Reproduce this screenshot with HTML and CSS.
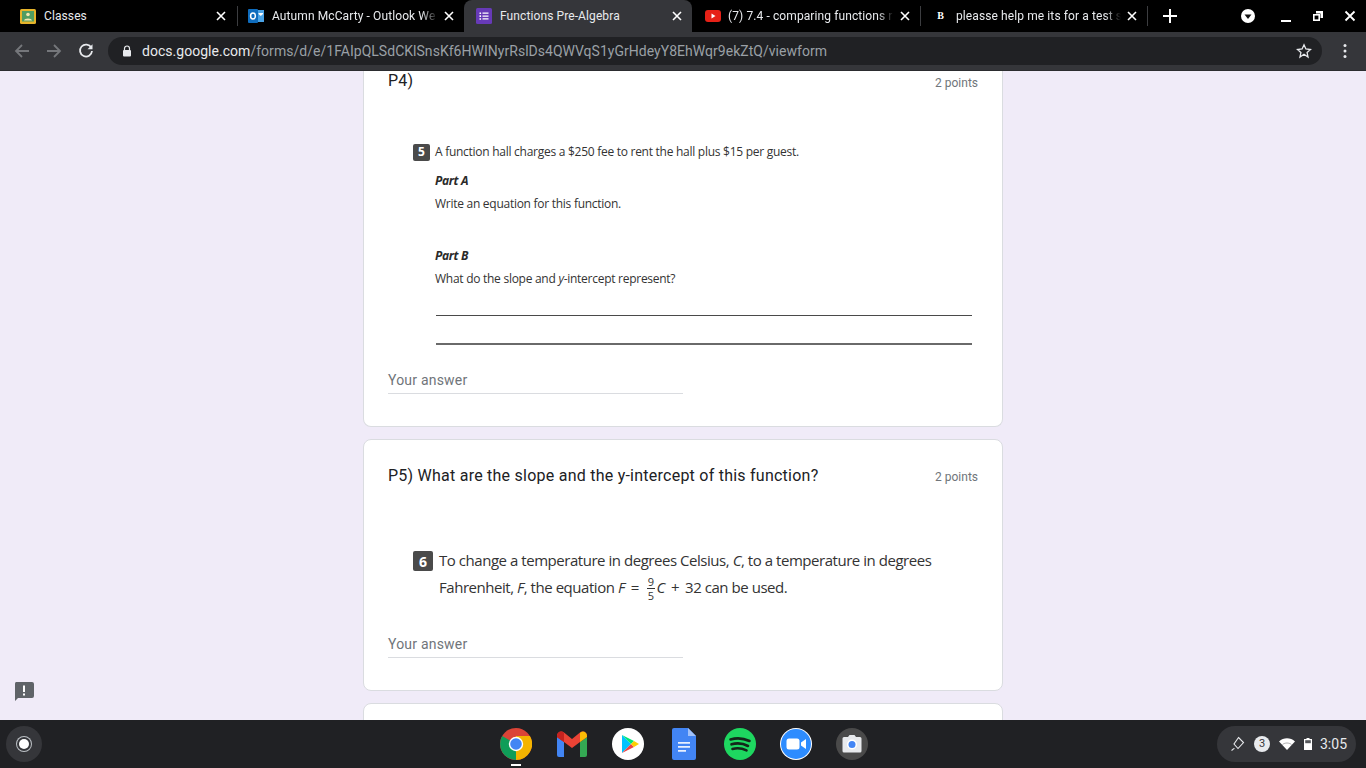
FILE: index.html
```html
<!DOCTYPE html>
<html lang="en">
<head>
<meta charset="utf-8">
<title>Functions Pre-Algebra</title>
<link rel="stylesheet" href="styles.css">
</head>
<body>
<div class="tabstrip">
  <div class="tab tab-w1">
    <svg class="fav" viewBox="0 0 16 16"><rect x="0" y="1" width="16" height="15" rx="1.5" fill="#e5b32a"/><rect x="2" y="3" width="12" height="10.500" fill="#4f9d62"/><circle cx="8" cy="6.500" r="1.800" fill="#f1e6b0"/><path d="M4 12.500c0-2.800 8-2.800 8 0z" fill="#f1e6b0"/></svg>
    <span class="tab-title">Classes</span>
    <svg class="tab-x" viewBox="0 0 14 14"><path d="M3 3l8 8M11 3l-8 8" stroke="#fff" stroke-width="1.600"/></svg>
  </div>
  <div class="sep"></div>
  <div class="tab tab-w2">
    <svg class="fav" viewBox="0 0 16 16"><rect x="6" y="2" width="10" height="12" fill="#4aa3e6"/><rect x="0" y="1" width="10" height="14" rx="1" fill="#0f6cbd"/><ellipse cx="5" cy="8" rx="2.400" ry="3" fill="none" stroke="#fff" stroke-width="1.500"/><path d="M10.500 5h4.500v1l-2.200 2-2.300-2z" fill="#fff"/></svg>
    <span class="tab-title fade">Autumn McCarty - Outlook We</span>
    <svg class="tab-x" viewBox="0 0 14 14"><path d="M3 3l8 8M11 3l-8 8" stroke="#fff" stroke-width="1.600"/></svg>
  </div>
  <div class="tab tab-active">
    <svg class="fav" viewBox="0 0 16 16"><rect width="16" height="16" rx="1.500" fill="#673ab7"/><path d="M6.500 4.500h6v1.300h-6zM6.500 7.400h6v1.300h-6zM6.500 10.300h6v1.300h-6zM3.500 4.400h1.600V6H3.500zM3.500 7.300h1.600v1.600H3.500zM3.500 10.200h1.600v1.600H3.500z" fill="#fff"/></svg>
    <span class="tab-title">Functions Pre-Algebra</span>
    <svg class="tab-x" viewBox="0 0 14 14"><path d="M3 3l8 8M11 3l-8 8" stroke="#fff" stroke-width="1.600"/></svg>
  </div>
  <div class="tab tab-w3">
    <svg class="fav" viewBox="0 0 16 16"><rect y="2" width="16" height="12" rx="3" fill="#e62117"/><path d="M6.500 5.500l4 2.500-4 2.500z" fill="#fff"/></svg>
    <span class="tab-title fade">(7) 7.4 - comparing functions r</span>
    <svg class="tab-x" viewBox="0 0 14 14"><path d="M3 3l8 8M11 3l-8 8" stroke="#fff" stroke-width="1.600"/></svg>
  </div>
  <div class="sep"></div>
  <div class="tab tab-w4">
    <span class="fav fav-b">B</span>
    <span class="tab-title fade">pleasse help me its for a test s</span>
    <svg class="tab-x" viewBox="0 0 14 14"><path d="M3 3l8 8M11 3l-8 8" stroke="#fff" stroke-width="1.600"/></svg>
  </div>
  <div class="sep"></div>
  <svg class="plus" viewBox="0 0 14 14"><path d="M7 0v14M0 7h14" stroke="#fff" stroke-width="2"/></svg>
  <div class="win-controls">
    <svg class="drop" viewBox="0 0 14 14"><circle cx="7" cy="7" r="7" fill="#fff"/><path d="M3.500 5.500h7L7 10z" fill="#111"/></svg>
    <svg class="win-btn win-min" viewBox="0 0 14 14"><path d="M2 12h10" stroke="#fff" stroke-width="2"/></svg>
    <svg class="win-btn" viewBox="0 0 14 14"><path d="M5 2h7v7H9.500V4.500H5z" fill="#fff"/><rect x="2.800" y="5.800" width="5.400" height="5.400" fill="none" stroke="#fff" stroke-width="1.600"/></svg>
    <svg class="win-btn" viewBox="0 0 14 14"><path d="M2.500 2.500l9 9M11.500 2.500l-9 9" stroke="#fff" stroke-width="1.800"/></svg>
  </div>
</div>

<div class="toolbar">
  <svg class="nav-icon" viewBox="0 0 16 16"><path d="M15 8H2M8 2L2 8l6 6" fill="none" stroke="#75777b" stroke-width="1.800"/></svg>
  <svg class="nav-icon" viewBox="0 0 16 16"><path d="M1 8h13M8 2l6 6-6 6" fill="none" stroke="#75777b" stroke-width="1.800"/></svg>
  <svg class="nav-icon" viewBox="0 0 16 16"><path d="M13.300 4.700A6 6 0 1 0 14 8" fill="none" stroke="#e8eaed" stroke-width="1.800"/><path d="M14.500 1.200v5h-5z" fill="#e8eaed"/></svg>
  <div class="omnibox">
    <svg class="lock" viewBox="0 0 10 12"><path d="M2.500 5V3.500a2.500 2.500 0 0 1 5 0V5" fill="none" stroke="#e8eaed" stroke-width="1.200"/><rect x="1" y="5" width="8" height="6.500" rx="1" fill="#e8eaed"/></svg>
    <span class="url"><span class="url-host">docs.google.com</span>/forms/d/e/1FAIpQLSdCKlSnsKf6HWINyrRslDs4QWVqS1yGrHdeyY8EhWqr9ekZtQ/viewform</span>
    <svg class="star" viewBox="0 0 16 16"><path d="M8 1.800l1.900 4.200 4.600.5-3.400 3.100.9 4.500L8 11.300l-4 2.800.9-4.500L1.500 6.500 6.100 6z" fill="none" stroke="#e8eaed" stroke-width="1.300"/></svg>
  </div>
  <svg class="menu" viewBox="0 0 4 16"><circle cx="2" cy="2.500" r="1.500" fill="#e8eaed"/><circle cx="2" cy="8" r="1.500" fill="#e8eaed"/><circle cx="2" cy="13.500" r="1.500" fill="#e8eaed"/></svg>
</div>

<main class="page">
  <section class="card card-clipped">
    <div class="q-head"><h2 class="q-title">P4)</h2><span class="points">2 points</span></div>
    <div class="figure fig5">
      <p class="fig-line"><span class="num num5">5</span>A function hall charges a $250 fee to rent the hall plus $15 per guest.</p>
      <div class="fig-body">
        <p class="part part-a">Part A</p>
        <p class="fig-text">Write an equation for this function.</p>
        <p class="part part-b">Part B</p>
        <p class="fig-text">What do the slope and <i>y</i>-intercept represent?</p>
        <div class="rule rule1"></div>
        <div class="rule rule2"></div>
      </div>
    </div>
    <div class="answer answer-1">Your answer</div>
  </section>

  <section class="card card-p5">
    <div class="q-head"><h2 class="q-title">P5) What are the slope and the y-intercept of this function?</h2><span class="points">2 points</span></div>
    <div class="figure fig6">
      <span class="num num6">6</span>
      <div class="fig6-text">
        <p>To change a temperature in degrees Celsius, <i>C</i>, to a temperature in degrees</p>
        <p class="fig6-l2">Fahrenheit, <i>F</i>, the equation <i>F</i><span class="op">=</span><span class="frac"><span class="numr">9</span><span class="den">5</span></span><i>C</i><span class="op">+</span>32 can be used.</p>
      </div>
    </div>
    <div class="answer answer-2">Your answer</div>
  </section>

  <section class="card card-next"></section>

  <div class="feedback">
    <svg viewBox="0 0 20 20"><path d="M2 0h16a2 2 0 0 1 2 2v12a2 2 0 0 1-2 2H4l-3 3V2a2 2 0 0 1 1-2z" fill="#5f6368"/><path d="M9 3.500h2v6.500H9zM9 11.500h2v2H9z" fill="#fff"/></svg>
  </div>
</main>

<footer class="shelf">
  <div class="launcher"><span class="launcher-dot"></span></div>
  <div class="apps">
    <div class="app app-active">
      <svg viewBox="0 0 32 32"><circle cx="16" cy="16" r="16" fill="#db4437"/><path d="M16 16L2.200 8A16 16 0 0 0 16 32z" fill="#0f9d58"/><path d="M16 8h13.900A16 16 0 0 1 16 32L16 16z" fill="#f4b400"/><circle cx="16" cy="16" r="7.200" fill="#fff"/><circle cx="16" cy="16" r="5.800" fill="#4285f4"/></svg>
      <span class="app-mark"></span>
    </div>
    <div class="app">
      <svg viewBox="0 0 32 32"><path d="M1 9v18a2 2 0 0 0 2 2h5V14z" fill="#4285f4"/><path d="M24 14v15h5a2 2 0 0 0 2-2V9z" fill="#34a853"/><path d="M1 8c0-4 4-5.500 7-3.500L16 11l8-6.500c3-2 7-.500 7 3.500v1l-7 5-8 6-8-6-7-5z" fill="#ea4335"/><path d="M24 5l.500-.6C27 2.500 31 4 31 8v1l-7 5z" fill="#fbbc04"/><path d="M1 8c0-4 4-5.500 7-3.500V14L1 9z" fill="#c5221f"/></svg>
    </div>
    <div class="app">
      <svg viewBox="0 0 32 32"><circle cx="16" cy="16" r="16" fill="#fff"/><path d="M10 7v18l9-9z" fill="#00c3ff"/><path d="M10 7l9 9 3-3z" fill="#00e676"/><path d="M10 25l9-9 3 3z" fill="#ef4444"/><path d="M22 13l-3 3 3 3 5-3z" fill="#fdd000"/></svg>
    </div>
    <div class="app">
      <svg viewBox="0 0 32 32"><path d="M6 0h14l8 8v22a2 2 0 0 1-2 2H6a2 2 0 0 1-2-2V2a2 2 0 0 1 2-2z" fill="#4285f4"/><path d="M20 0l8 8h-8z" fill="#a1c2fa"/><path d="M10 14h12v1.800H10zM10 18h12v1.800H10zM10 22h8v1.800h-8z" fill="#e8f0fe"/></svg>
    </div>
    <div class="app">
      <svg viewBox="0 0 32 32"><circle cx="16" cy="16" r="16" fill="#1ed760"/><path d="M6.500 11.500c6-1.800 13-1.300 19 1.500M7.500 16.300c5.500-1.500 11.500-1 16.500 1.700M8.500 21c4.500-1.200 9.500-.8 14 1.400" fill="none" stroke="#14261a" stroke-width="2.600" stroke-linecap="round"/></svg>
    </div>
    <div class="app">
      <svg viewBox="0 0 32 32"><circle cx="16" cy="16" r="16" fill="#fff"/><circle cx="16" cy="16" r="15" fill="#2d8cff"/><rect x="6.500" y="10.500" width="13" height="11" rx="2.500" fill="#fff"/><path d="M21 14.500l5-3.500v10l-5-3.500z" fill="#fff"/></svg>
    </div>
    <div class="app">
      <svg viewBox="0 0 32 32"><circle cx="16" cy="16" r="16" fill="#4a4a4a"/><path d="M6.500 10.500a1.500 1.500 0 0 1 1.500-1.500h4l1.500-2h5l1.500 2h4a1.500 1.500 0 0 1 1.500 1.500V23a1.500 1.500 0 0 1-1.500 1.500H8A1.500 1.500 0 0 1 6.500 23z" fill="#e8eaed"/><circle cx="16" cy="16.500" r="5" fill="#fff"/><circle cx="16" cy="16.500" r="3.500" fill="#4285f4"/></svg>
    </div>
  </div>
  <div class="tray">
    <svg class="tray-stylus" viewBox="0 0 16 16"><path d="M8.500 1.500l5 5-5.500 6-4-4.500zM1.500 14.500c1.500-.5 1.500-2 3-2" fill="none" stroke="#e8eaed" stroke-width="1.100"/></svg>
    <span class="tray-badge">3</span>
    <svg class="tray-wifi" viewBox="0 0 16 12"><path d="M0 3.500C4.500-.8 11.500-.8 16 3.500L8 12z" fill="#fff"/><path d="M3.500 6.500c2.500-2 6.500-2 9 0" fill="none" stroke="#35363a" stroke-width=".4"/></svg>
    <svg class="tray-batt" viewBox="0 0 8 12"><path d="M2.500 0h3v1H8v11H0V1h2.500z" fill="#fff"/><rect x="1.200" y="2.200" width="5.600" height="3" fill="#55575b"/></svg>
    <span class="clock">3:05</span>
  </div>
</footer>
</body>
</html>
```
FILE: styles.css
```css
* { box-sizing: border-box; }
html, body { margin: 0; height: 100%; overflow: hidden; }
body { width: 1366px; height: 768px; display: flex; flex-direction: column; font-family: Roboto, "Liberation Sans", sans-serif; background: #f0ebf8; }
p, h2 { margin: 0; font-weight: 400; }

.tabstrip { height: 32px; flex: none; background: #000; display: flex; align-items: center; color: #e8eaed; font-size: 12px; }
.tab { height: 32px; display: flex; align-items: center; flex: none; }
.tab-w1 { width: 237px; padding: 0 9px 0 20px; }
.tab-w2 { width: 226px; padding: 0 8px 0 10px; }
.tab-w3 { width: 228px; padding: 0 8px 0 13px; }
.tab-w3 .fav { margin-right: 7px; }
.tab-w4 { width: 226px; padding: 0 8px 0 14px; }
.tab-active { width: 228px; padding: 0 8px 0 12px; background: #35363a; border-radius: 8px 8px 0 0; }
.fav { width: 16px; height: 16px; flex: none; margin-right: 8px; }
.fav-b { width: 11px; font: 700 10px/16px "Liberation Serif", serif; color: #fff; text-align: center; margin-right: 10px; }
.tab-title { flex: 1; min-width: 0; white-space: nowrap; overflow: hidden; letter-spacing: .1px; }
.fade { -webkit-mask-image: linear-gradient(90deg, #000 90%, transparent 100%); mask-image: linear-gradient(90deg, #000 90%, transparent 100%); }
.tab-x { width: 14px; height: 14px; flex: none; margin-left: 4px; }
.sep { width: 1px; height: 20px; background: #3c3d40; flex: none; }
.plus { width: 14px; height: 14px; margin-left: 15px; flex: none; }
.win-controls { display: flex; align-items: center; margin-left: auto; padding-right: 9px; gap: 18px; }
.drop { width: 14px; height: 14px; }
.win-btn { width: 14px; height: 14px; }
.win-min { margin-left: 6px; }

.toolbar { height: 39px; flex: none; background: #35363a; display: flex; align-items: center; padding-left: 14px; border-bottom: 1px solid #2b2c2f; }
.nav-icon { width: 16px; height: 16px; flex: none; margin-right: 16px; }
.omnibox { flex: none; width: 1214px; height: 28px; margin-left: -2px; background: #202124; border-radius: 14px; display: flex; align-items: center; padding: 0 10px 0 14px; }
.lock { width: 10px; height: 12px; flex: none; }
.url { margin-left: 10px; font-size: 14px; color: #9aa0a6; white-space: nowrap; flex: 1; letter-spacing: .03px; }
.url-host { color: #e8eaed; }
.star { width: 16px; height: 16px; flex: none; }
.menu { width: 4px; height: 16px; margin-left: 21px; flex: none; }

.page { flex: 1; min-height: 0; overflow: hidden; display: flex; flex-direction: column; align-items: center; gap: 12px; position: relative; background: #f0ebf8; }
.card { width: 640px; flex: none; background: #fff; border: 1px solid #dadce0; border-radius: 8px; padding: 0 24px; }
.card-clipped { height: 356px; border-top: 0; border-radius: 0 0 8px 8px; }
.card-p5 { height: 252px; }
.card-next { height: 30px; }
.q-head { display: flex; justify-content: space-between; align-items: flex-start; }
.q-title { font-size: 16px; line-height: 24px; color: #202124; letter-spacing: .24px; }
.points { font-size: 12px; line-height: 16px; color: #70757a; }
.card-clipped .q-head { height: 24px; }
.card-clipped .q-title { margin-top: -2px; }
.card-clipped .points { margin-top: 4px; }
.card-p5 .q-head { padding-top: 24px; }
.card-p5 .points { margin-top: 5px; }

.figure { font-family: "Open Sans", "Liberation Sans", sans-serif; color: #333; }
.fig5 { font-size: 12px; line-height: 18px; margin-top: 48px; padding-left: 25px; }
.fig-line { display: flex; align-items: center; letter-spacing: -.27px; }
.num { display: flex; align-items: center; justify-content: center; background: #4a4a4a; color: #fff; font-weight: 700; border-radius: 2px; flex: none; letter-spacing: 0; }
.num5 { width: 17px; height: 17px; margin-right: 5px; font-size: 12px; }
.fig-body { padding-left: 22px; }
.part { font-weight: 700; font-style: italic; letter-spacing: -.3px; color: #2a2a2a; }
.part-a { margin-top: 11px; }
.part-b { margin-top: 34px; }
.fig-text { margin-top: 5px; letter-spacing: -.27px; }
.rule { background: #4a4a4a; height: 1px; margin-left: 1px; width: 536px; }
.rule1 { margin-top: 27px; }
.rule2 { margin-top: 27px; background: #6a6a6a; height: 2px; }

.answer { width: 295px; font-size: 14px; line-height: 20px; color: #70757a; border-bottom: 1px solid #dadce0; padding-bottom: 3px; letter-spacing: .2px; }
.answer-1 { margin-top: 25px; }
.answer-2 { margin-top: 36px; }

.fig6 { display: flex; margin-top: 61px; padding-left: 25px; font-size: 15px; letter-spacing: -.46px; }
.num6 { width: 20px; height: 20px; margin-right: 6px; font-size: 14px; margin-top: 2px; }
.fig6-text p { line-height: 22px; }
.fig6-l2 { margin-top: 5px; height: 22px; }
.op { margin: 0 6px; }
.frac { display: inline-flex; flex-direction: column; align-items: center; vertical-align: middle; font-size: 11px; margin: -4px 2px; }
.numr { line-height: 13px; }
.den { border-top: 1px solid #333; line-height: 13px; padding: 0 1px; }

.feedback { position: absolute; left: 14px; top: 611px; width: 20px; height: 20px; }
.feedback svg { display: block; width: 20px; height: 20px; }

.shelf { height: 48px; flex: none; background: #202124; display: flex; align-items: center; position: relative; padding: 0 10px 0 6px; }
.launcher { width: 36px; height: 36px; border-radius: 50%; background: #35363a; display: flex; align-items: center; justify-content: center; }
.launcher-dot { width: 10px; height: 10px; border-radius: 50%; background: #fff; box-shadow: 0 0 0 2px #35363a, 0 0 0 3px #bdc1c6; display: block; }
.apps { position: absolute; left: 500px; top: 0; display: flex; gap: 24px; }
.app { width: 32px; height: 48px; display: flex; align-items: center; position: relative; }
.app svg { width: 32px; height: 32px; display: block; }
.app-mark { position: absolute; left: 11px; bottom: 2px; width: 10px; height: 2px; background: #fff; }
.tray { margin-left: auto; height: 36px; border-radius: 18px; background: #35363a; width: 139px; display: flex; align-items: center; padding-left: 13px; color: #e8eaed; }
.tray-stylus { width: 16px; height: 16px; flex: none; }
.tray-badge { width: 16px; height: 16px; border-radius: 50%; background: #e8eaed; color: #35363a; font-size: 11px; line-height: 16px; text-align: center; margin-left: 8px; flex: none; }
.tray-wifi { width: 16px; height: 12px; margin-left: 9px; flex: none; }
.tray-batt { width: 8px; height: 12px; margin-left: 9px; flex: none; }
.clock { margin-left: 8px; font-size: 14px; }
```
